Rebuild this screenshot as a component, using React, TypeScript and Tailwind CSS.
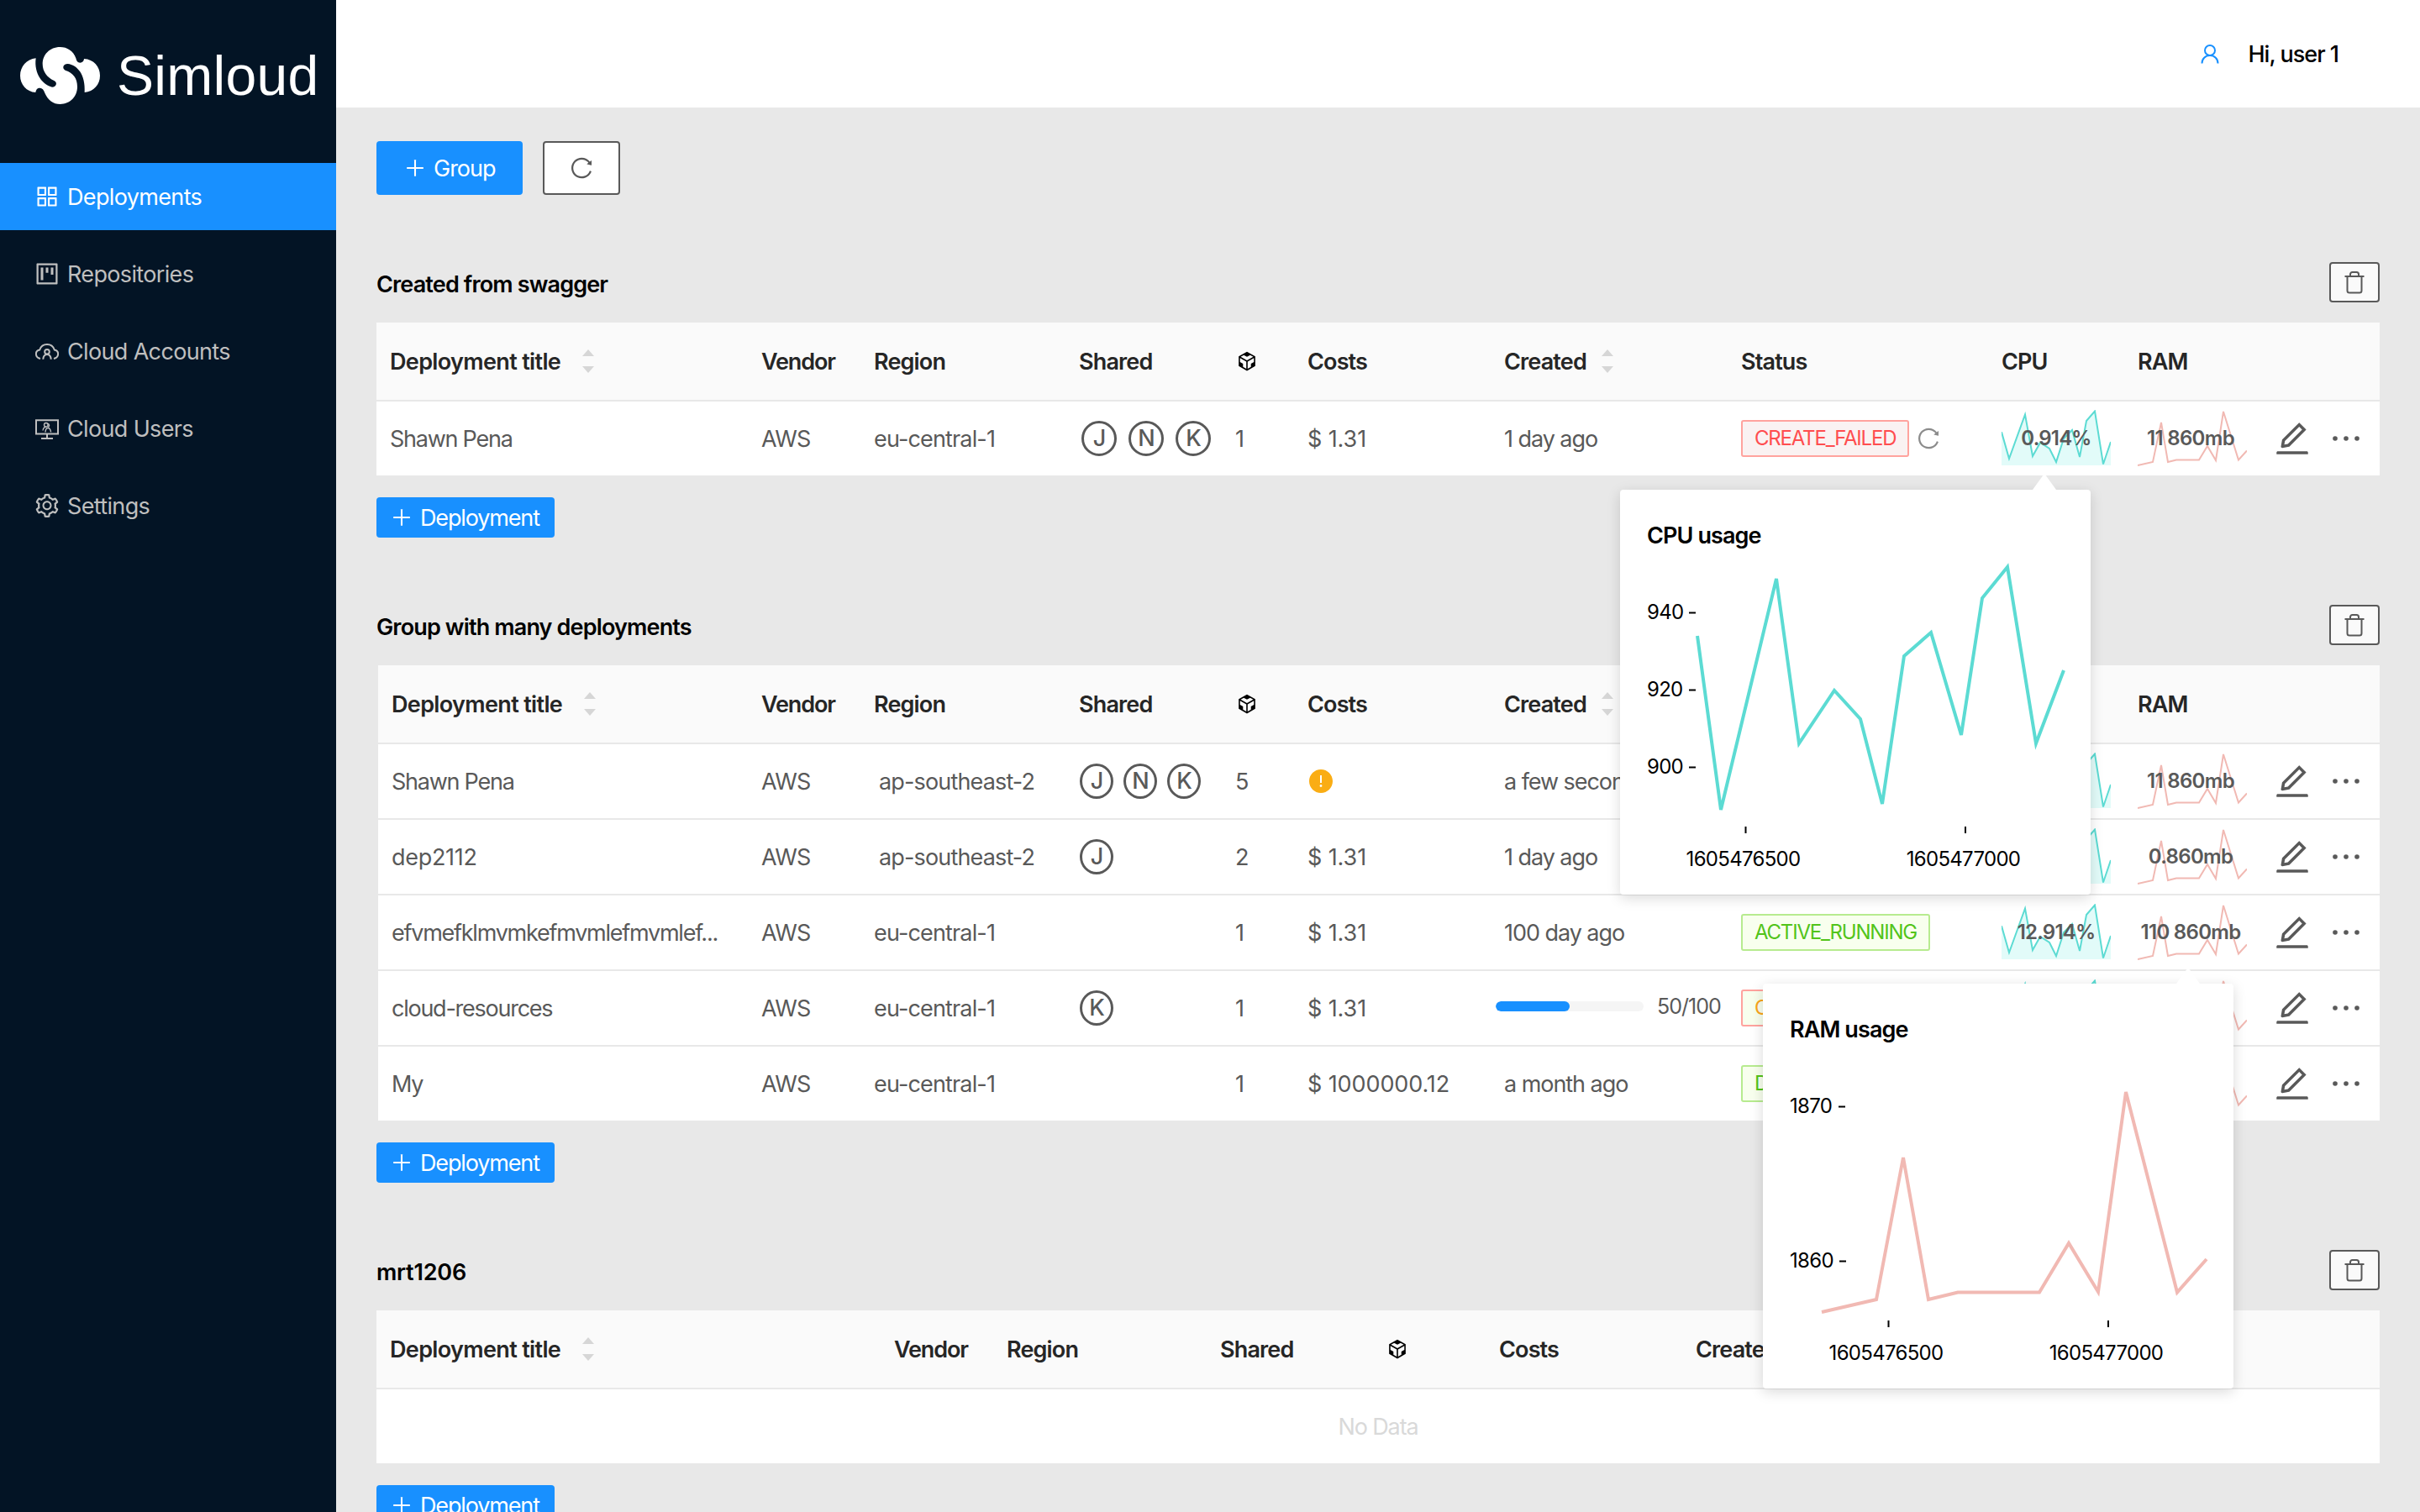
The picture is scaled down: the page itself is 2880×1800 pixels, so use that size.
import { ReactNode } from "react";
import {
	AiFillExclamationCircle,
	AiOutlineAppstore,
	AiOutlineCodeSandbox,
	AiOutlineEdit,
	AiOutlinePlus,
	AiOutlineProject,
	AiOutlineReload,
	AiOutlineSetting,
} from "react-icons/ai";

interface Deployment {
	title: string;
	region: string;
	shared: string[];
	count: number;
	costs?: string;
	created?: string;
	progress?: number;
	status: string;
	statusType: "error" | "success" | "warning";
	canReload?: boolean;
	cpu: string;
	ram: string;
}

interface Group {
	name: string;
	deployments: Deployment[];
}

const groups: Group[] = [
	{
		name: "Created from swagger",
		deployments: [
			{ title: "Shawn Pena", region: "eu-central-1", shared: ["J", "N", "K"], count: 1, costs: "1.31", created: "1 day ago", status: "CREATE_FAILED", statusType: "error", canReload: true, cpu: "0.914%", ram: "11 860mb" },
		],
	},
	{
		name: "Group with many deployments",
		deployments: [
			{ title: "Shawn Pena", region: "ap-southeast-2", shared: ["J", "N", "K"], count: 5, created: "a few seconds", status: "ACTIVE", statusType: "success", cpu: "0.914%", ram: "11 860mb" },
			{ title: "dep2112", region: "ap-southeast-2", shared: ["J"], count: 2, costs: "1.31", created: "1 day ago", status: "ACTIVE", statusType: "success", cpu: "0.914%", ram: "0.860mb" },
			{ title: "efvmefklmvmkefmvmlefmvmlef...", region: "eu-central-1", shared: [], count: 1, costs: "1.31", created: "100 day ago", status: "ACTIVE_RUNNING", statusType: "success", cpu: "12.914%", ram: "110 860mb" },
			{ title: "cloud-resources", region: "eu-central-1", shared: ["K"], count: 1, costs: "1.31", progress: 50, status: "CREATING", statusType: "warning", cpu: "0.914%", ram: "0.860mb" },
			{ title: "My", region: "eu-central-1", shared: [], count: 1, costs: "1000000.12", created: "a month ago", status: "DELETED", statusType: "success", cpu: "0.914%", ram: "0.860mb" },
		],
	},
	{ name: "mrt1206", deployments: [] },
];

const tagStyles = {
	error: "border-[#ffa39e] bg-[#faf2f2] text-[#ff4d4f]",
	success: "border-[#b7eb8f] bg-[#f8ffee] text-[#52c41a]",
	warning: "border-[#ffa39e] bg-[#f8ffee] text-[#faa61a]",
};

const Logo = () => (
	<div className="flex h-[194px] items-start pl-6 pt-14">
		<svg className="h-[68px] w-[95px]" viewBox="42 48 285 204" fill="#fff">
			<path d="M98 88C65 92 42 118 42 150c0 32 23 58 55 60 1-8 5-15 13-16 10-1 16 6 20 18 10 24 30 40 55 40 35 0 61-27 61-62 0-30-14-50-43-59-11-5-10-23 9-23 33 4 64 37 60 102 33-3 55-28 55-60s-22-58-57-60c0 8-6 14-14 14-9 0-13-6-15-16-9-26-31-40-57-40-36 0-62 27-62 60 0 27 16 49 41 60 13 6 9 23-7 23-31-6-66-46-58-103Z" />
		</svg>
		<span className="ml-5 mt-[-2px] font-['Liberation_Sans',sans-serif] text-[66px] leading-[72px] tracking-[0.3px] text-white">Simloud</span>
	</div>
);

const CloudAccountsIcon = () => (
	<svg className="size-7" viewBox="0 0 28 28" fill="none" stroke="currentColor" strokeWidth="2">
		<path d="M6 23C-.8 21.500-.6 13.500 5.200 12.500 6.500 8.500 9.800 6 14 6s7.500 2.500 8.800 6.500C28.600 13.500 28.800 21.500 22 23" />
		<circle cx="14" cy="14.800" r="2.800" />
		<path d="M9.300 23.800c.2-3.600 2-5.900 4.700-5.900s4.500 2.300 4.700 5.900" />
	</svg>
);

const CloudUsersIcon = () => (
	<svg className="size-7" viewBox="0 0 28 28" fill="none" stroke="currentColor" strokeWidth="2">
		<path d="M1 4.200h26v16.300H1zM14 20.500v5.500M7 26h14" />
		<g strokeWidth="1.400">
			<circle cx="12.800" cy="9.800" r="2.300" />
			<path d="M9 16.500c.3-3 1.700-4.300 3.800-4.300M14.500 8.200c2.300.2 2.700 3 .8 4.200M12 18.500c.2-3 1-5 3-5s3.200 2 3.600 5" />
		</g>
	</svg>
);

const UserIcon = () => (
	<svg className="h-6 w-[22px]" viewBox="0 0 22 24" fill="none" stroke="#1890ff" strokeWidth="2">
		<circle cx="11" cy="8" r="6" />
		<path d="M1.500 23.500C1.500 18 5.500 14 11 14s9.500 4 9.500 9.500" />
	</svg>
);

const TrashIcon = () => (
	<svg className="h-7 w-6" viewBox="0 0 24 28" fill="none" stroke="currentColor" strokeWidth="2">
		<path d="M.5 7h23M7 7V4.500A2.500 2.500 0 0 1 9.500 2h5A2.500 2.500 0 0 1 17 4.500V7M3.500 7v17a2.500 2.500 0 0 0 2.500 2.500h12a2.500 2.500 0 0 0 2.500-2.500V7" />
	</svg>
);

const menu = [
	{ label: "Deployments", icon: <AiOutlineAppstore className="-mx-0.5 size-8" />, active: true },
	{ label: "Repositories", icon: <AiOutlineProject className="-mx-0.5 size-8" /> },
	{ label: "Cloud Accounts", icon: <CloudAccountsIcon /> },
	{ label: "Cloud Users", icon: <CloudUsersIcon /> },
	{ label: "Settings", icon: <AiOutlineSetting className="-mx-0.5 size-8" /> },
];

const Sidebar = () => (
	<aside className="w-[400px] shrink-0 bg-[#031425]">
		<Logo />
		<nav className="flex flex-col gap-3 tracking-[-0.65px]">
			{menu.map((item) => (
				<a
					key={item.label}
					className={
						item.active
							? "flex h-20 items-center gap-2.5 bg-[#1890ff] pl-[42px] text-white"
							: "flex h-20 items-center gap-2.5 pl-[42px] text-[#bfbfbf]"
					}
				>
					{item.icon}
					<span className="pt-0.5">{item.label}</span>
				</a>
			))}
		</nav>
	</aside>
);

const Sorter = () => (
	<svg className="h-7 w-[14px]" viewBox="0 0 14 28" fill="#d6d6d6">
		<path d="M7 0l7 8H0zM7 28l7-8H0z" />
	</svg>
);

const CpuSpark = ({ value }: { value: string }) => (
	<div className="relative h-[68px] w-[130px]">
		<svg className="h-[68px] w-[130px]" viewBox="0 0 130 68" fill="none">
			<path d="M0 26.300 9 58 28 5.500 37 55 46 39 57 46 65 62 74 34 84 24 93 56 101 13 111 1.500 121 64.500 130 38V66H0z" fill="#e2fbf9" />
			<path d="M0 26.300 9 58 28 5.500 37 55 46 39 57 46 65 62 74 34 84 24 93 56 101 13 111 1.500 121 64.500 130 38" stroke="#5cdbd3" strokeWidth="2" />
		</svg>
		<span className="absolute inset-0 flex items-center justify-center whitespace-nowrap text-2xl font-semibold tracking-[-0.8px]">{value}</span>
	</div>
);

const RamSpark = ({ value }: { value: string }) => (
	<div className="relative h-[68px] w-[130px]">
		<svg className="h-[68px] w-[130px]" viewBox="0 0 130 68" fill="none">
			<path d="M0 66 18 62 28 15 36 62 46 59.500H73L83 43 93 60 102 2 120 59.500 130 48.500" stroke="#f1b9b3" strokeWidth="2" />
		</svg>
		<span className="absolute inset-0 flex items-center justify-center whitespace-nowrap pr-1 text-2xl font-semibold tracking-[-0.7px]">{value}</span>
	</div>
);

const Row = ({ d, wide, last }: { d: Deployment; wide: boolean; last: boolean }) => (
	<div className={wide
		? "grid h-[88px] grid-cols-[442px_134px_244px_186px_86px_234px_282px_310px_162px_162px_142px] items-center bg-white"
		: last
			? "grid h-[88px] grid-cols-[440px_134px_244px_186px_86px_234px_282px_310px_162px_162px_142px] items-center bg-white"
			: "grid h-[90px] grid-cols-[440px_134px_244px_186px_86px_234px_282px_310px_162px_162px_142px] items-center border-b-2 border-[#e8e8e8] bg-white"
	}>
		<div className={/\d/.test(d.title) ? "whitespace-nowrap pl-4 pt-0.5 tracking-[-0.3px]" : "whitespace-nowrap pl-4 pt-0.5 tracking-[-1.25px]"}>{d.title}</div>
		<div className="pl-4 pt-0.5">AWS</div>
		<div className={d.region.startsWith("ap") ? "pl-[22px] pt-0.5" : "pl-4 pt-0.5"}>{d.region}</div>
		<div className={wide ? "flex gap-[14px] pl-[19px]" : "flex gap-3 pl-[17px]"}>
			{d.shared.map((s) => (
				<span
					key={s}
					className={wide
						? "flex h-[42px] w-[42px] items-center justify-center rounded-full border-[3px] border-[#595959] font-medium"
						: "flex h-[42px] w-10 items-center justify-center rounded-[50%] border-[3px] border-[#595959] font-medium"
					}
				>
					{s}
				</span>
			))}
		</div>
		<div className="pl-4 pt-0.5">{d.count}</div>
		{d.costs ? (
			<div className="pl-4 pt-0.5 tracking-[-0.1px]">{"$ " + d.costs}</div>
		) : (
			<div className="pl-4"><AiFillExclamationCircle className="size-8 text-[#faad14]" /></div>
		)}
		{d.progress ? (
			<div className="mt-[-4px] flex items-center pl-1.5">
				<div className="h-3 w-44 overflow-hidden rounded-full bg-[#f5f5f5]">
					<div className="h-3 rounded-full bg-[#1890ff]" style={{ width: d.progress + "%" }}></div>
				</div>
				<span className="ml-4 text-[25px] tracking-[-1px]">{d.progress}/100</span>
			</div>
		) : (
			<div className="whitespace-nowrap pl-4 pt-0.5 tracking-[-1.05px]">{d.created}</div>
		)}
		<div className="flex items-center gap-2 pl-4">
			<span className={"flex h-11 items-center rounded-[3px] border-2 px-[14px] text-2xl tracking-[-1.2px] " + tagStyles[d.statusType]}>{d.status}</span>
			{d.canReload && <AiOutlineReload className="size-[30px] text-[#8c8c8c]" />}
		</div>
		<div className="pl-4"><CpuSpark value={d.cpu} /></div>
		<div className="pl-4"><RamSpark value={d.ram} /></div>
		<div className="flex items-center pl-[14px]">
			<AiOutlineEdit className="size-12" />
			<svg className="ml-6 h-2 w-8" viewBox="0 0 32 8" fill="currentColor">
				<circle cx="3" cy="4" r="2.800" />
				<circle cx="16" cy="4" r="2.800" />
				<circle cx="29" cy="4" r="2.800" />
			</svg>
		</div>
	</div>
);

const Table = ({ deployments }: { deployments: Deployment[] }) => {
	const empty = deployments.length === 0;
	const single = deployments.length === 1;

	return (
		<div className={empty || single ? "mt-6" : "mt-6 ml-0.5"}>
			<div className={empty
				? "grid h-[94px] grid-cols-[600px_134px_254px_197px_135px_234px_282px_1fr] items-center border-b-2 border-[#e8e8e8] bg-[#fafafa] font-semibold text-[#262626]"
				: single
					? "grid h-[94px] grid-cols-[442px_134px_244px_186px_86px_234px_282px_310px_162px_162px_142px] items-center border-b-2 border-[#e8e8e8] bg-[#fafafa] font-semibold text-[#262626]"
					: "grid h-[94px] grid-cols-[440px_134px_244px_186px_86px_234px_282px_310px_162px_162px_142px] items-center border-b-2 border-[#e8e8e8] bg-[#fafafa] font-semibold text-[#262626]"
			}>
				<div className="flex items-center gap-[26px] pl-4 tracking-[-0.65px]"><span className="pt-0.5">Deployment title</span> <Sorter /></div>
				<div className="pl-4 pt-0.5 tracking-[-1.1px]">Vendor</div>
				<div className="pl-4 pt-0.5">Region</div>
				<div className="pl-4 pt-0.5">Shared</div>
				<div className="pl-4"><AiOutlineCodeSandbox className="size-7 text-black" /></div>
				<div className="pl-4 pt-0.5">Costs</div>
				<div className="flex items-center gap-[18px] pl-4"><span className="pt-0.5">Created</span> <Sorter /></div>
				{!empty && (
					<>
						<div className="pl-4 pt-0.5">Status</div>
						<div className="pl-4 pt-0.5">CPU</div>
						<div className="pl-4 pt-0.5">RAM</div>
					</>
				)}
			</div>
			{empty ? (
				<div className="flex h-[88px] items-center justify-center bg-white pt-0.5 tracking-[-1.1px] text-[#d9d9d9]">No Data</div>
			) : (
				deployments.map((d, i) => (
					<Row key={i} d={d} wide={single} last={i === deployments.length - 1} />
				))
			)}
		</div>
	);
};

const Popover = ({ title, className, arrow, children }: { title: string; className: string; arrow: string; children: ReactNode }) => (
	<div className={"absolute h-[482px] w-[560px] rounded bg-white shadow-[0_4px_16px_rgba(0,0,0,0.15)] " + className}>
		<svg className={"absolute top-[-18px] h-[18px] w-7 " + arrow} viewBox="0 0 28 18" fill="#fff">
			<path d="M0 18 12 1.500q2-2 4 0L28 18z" />
		</svg>
		<h3 className="absolute left-8 top-[37px] font-semibold leading-9 tracking-[-0.9px] text-black">{title}</h3>
		<svg className="absolute inset-0 h-[482px] w-[560px] text-2xl tracking-[-0.7px]" viewBox="0 0 560 482" fill="none">
			{children}
		</svg>
	</div>
);

const XAxis = () => (
	<>
		<path d="M149.500 401v8M411 401v8" stroke="#000" strokeWidth="2" />
		<text x="146.500" y="448" textAnchor="middle" fill="#000">1605476500</text>
		<text x="408.500" y="448" textAnchor="middle" fill="#000">1605477000</text>
	</>
);

export default function App() {
	return (
		<div className="relative flex h-[1800px] w-[2880px] overflow-hidden bg-[#e8e8e8] font-[Inter,sans-serif] text-[27px] leading-9 tracking-[-0.85px] text-[#595959]">
			<Sidebar />
			<div className="flex-1">
				<header className="flex h-32 items-center justify-end bg-white pr-[97px]">
					<UserIcon />
					<span className="ml-[34px] pt-0.5 font-medium tracking-[-1px] text-black">Hi, user 1</span>
				</header>
				<main className="px-12 pt-10">
					<div className="flex gap-6">
						<button className="flex h-16 w-[174px] items-center gap-2 rounded bg-[#1890ff] pl-8 tracking-[-1px] text-white">
							<AiOutlinePlus className="size-7" />
							<span className="pt-0.5">Group</span>
						</button>
						<button className="flex h-16 w-[92px] items-center justify-center rounded border-2 border-[#595959] bg-white">
							<AiOutlineReload className="size-[30px]" />
						</button>
					</div>
					{groups.map((group) => (
						<section key={group.name} className="mt-20">
							<div className="flex h-12 items-center justify-between">
								<h2 className={/\d/.test(group.name) ? "pt-1.5 font-semibold tracking-[-0.2px] text-black" : "pt-1.5 font-semibold tracking-[-0.85px] text-black"}>{group.name}</h2>
								<button className="flex h-12 w-[60px] items-center justify-center rounded border-2 border-[#595959] bg-[#fafafa]">
									<TrashIcon />
								</button>
							</div>
							<Table deployments={group.deployments} />
							<button className="mt-[26px] flex h-12 w-[212px] items-center gap-2 rounded bg-[#1890ff] pl-4 tracking-[-1.15px] text-white">
								<AiOutlinePlus className="size-7" />
								<span className="pt-0.5">Deployment</span>
							</button>
						</section>
					))}
				</main>
			</div>

			<Popover title="CPU usage" className="left-[1928px] top-[583px]" arrow="left-[491px]">
				<text x="32" y="154" fill="#000">940</text>
				<text x="32" y="246" fill="#000">920</text>
				<text x="32" y="338" fill="#000">900</text>
				<path d="M82 146.500h8M82 238.500h8M82 330.500h8" stroke="#000" strokeWidth="2" />
				<path d="M92 174 120 381 186 106 213 302 255 239 286 273 312 374 338 198 370 170 406 292 431 129 461 92 495 302 528 215" stroke="#5cdbd3" strokeWidth="4" />
				<XAxis />
			</Popover>
			<Popover title="RAM usage" className="left-[2098px] top-[1171px]" arrow="left-[492px]">
				<text x="32" y="154" fill="#000">1870</text>
				<text x="32" y="338" fill="#000">1860</text>
				<path d="M90 146.500h8M91 330.500h8" stroke="#000" strokeWidth="2" />
				<path d="M70 391 135 376 167 207 197 376 232 367.500H329L364 309 399 367 432 129 493 367.500 528 328" stroke="#f1b9b3" strokeWidth="4" />
				<XAxis />
			</Popover>
		</div>
	);
}
